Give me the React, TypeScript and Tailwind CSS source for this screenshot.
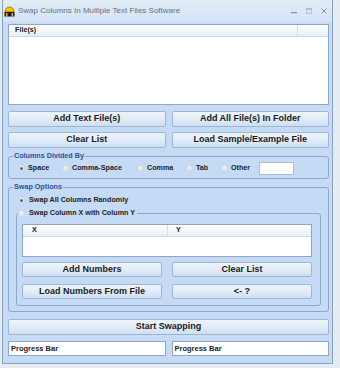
import React from 'react';

const font = { fontFamily: '"Liberation Sans", Arial, sans-serif' };

function Btn({ label, className = '' }: { label: string; className?: string }) {
    return (
        <div className={`flex items-center justify-center rounded-[2px] border border-[#9fb5d2] bg-gradient-to-b from-[#eef4fb] via-[#e2ecf8] to-[#cddff3] text-[9px] font-bold text-[#1b1b1b] ${className}`}>
            {label}
        </div>
    );
}

function Radio({ checked = false }: { checked?: boolean }) {
    return (
        <span className="flex h-[7px] w-[7px] shrink-0 items-center justify-center rounded-full border border-[#cfd6df] bg-gradient-to-b from-[#f4f6f9] to-[#dde3ea]">
            {checked && <span className="h-[3px] w-[3px] rounded-full bg-[#5b626b]" />}
        </span>
    );
}

function Option({ label, checked, w }: { label: string; checked?: boolean; w: string }) {
    return (
        <div className={`flex items-center gap-[3px] ${w}`}>
            <Radio checked={checked} />
            <span className="text-[7.2px] font-bold text-[#222]">{label}</span>
        </div>
    );
}

export default function App() {
    return (
        <div className="h-[368px] w-[340px] overflow-hidden bg-[#e4ebf3] pl-[2px]" style={font}>
            <div className="flex h-[364px] w-[331px] flex-col border border-t-0 border-[#8aa3c4] bg-[#c5daf4]">

                {/* Title bar */}
                <div className="flex h-[22px] shrink-0 items-center bg-gradient-to-b from-[#e3edf9] to-[#d3e3f6] pl-[1px] pr-[4px]">
                    <svg width="11" height="11" viewBox="0 0 11 11" className="shrink-0">
                        <path d="M1 6 Q1 1 5.5 1 Q10 1 10 6 Z" fill="#f2c200" stroke="#7a5a00" strokeWidth="0.6" />
                        <rect x="0.5" y="6" width="10" height="4.5" fill="#1a1a1a" />
                        <rect x="2" y="7" width="1.5" height="3.5" fill="#e8b800" />
                        <rect x="7.5" y="7" width="1.5" height="3.5" fill="#e8b800" />
                    </svg>
                    <span className="ml-[3px] text-[8px] text-[#5f7088]">Swap Columns In Multiple Text Files Software</span>
                    <div className="ml-auto flex items-center gap-[9px] pr-[1px]">
                        <svg width="6" height="6" viewBox="0 0 6 6"><rect x="0" y="4" width="6" height="1.2" fill="#7f8ea3" /></svg>
                        <svg width="6" height="6" viewBox="0 0 6 6"><rect x="0.5" y="0.5" width="5" height="5" fill="none" stroke="#a9b6c7" strokeWidth="0.8" /><rect x="0.5" y="0.5" width="5" height="1.2" fill="#a9b6c7" /></svg>
                        <svg width="6" height="6" viewBox="0 0 6 6"><path d="M0.5 0.5 L5.5 5.5 M5.5 0.5 L0.5 5.5" stroke="#8292a8" strokeWidth="1" /></svg>
                    </div>
                </div>

                {/* Body */}
                <div className="flex flex-col pl-[5px] pr-[3px] pt-[2px]">

                    {/* File list */}
                    <div className="flex h-[81px] flex-col border border-[#8fa6c4] bg-white">
                        <div className="flex h-[12px] border-b border-[#c9d6e6] bg-gradient-to-b from-white to-[#e6eef7]">
                            <div className="flex w-[289px] items-center border-r border-[#d3dde9] pl-[6px] text-[7.2px] font-bold text-[#222]">File(s)</div>
                            <div className="flex-1" />
                        </div>
                    </div>

                    <div className="mt-[6px] grid grid-cols-2 gap-x-[6px] gap-y-[5px]">
                        <Btn label="Add Text File(s)" className="h-[16px]" />
                        <Btn label="Add All File(s) In Folder" className="h-[16px]" />
                        <Btn label="Clear List" className="h-[16px]" />
                        <Btn label="Load Sample/Example File" className="h-[16px]" />
                    </div>

                    {/* Columns Divided By */}
                    <fieldset className="mt-[3px] h-[28px] rounded-[3px] border border-[#8ea7c7]">
                        <legend className="ml-[4px] px-[1px] text-[7.2px] font-bold leading-[10px] text-[#2452a0]">Columns Divided By</legend>
                        <div className="flex h-[14px] items-center pl-[9px] pt-[1px]">
                            <Option label="Space" checked w="w-[44px]" />
                            <Option label="Comma-Space" w="w-[75px]" />
                            <Option label="Comma" w="w-[49px]" />
                            <Option label="Tab" w="w-[35px]" />
                            <Option label="Other" w="w-[38px]" />
                            <div className="h-[13px] w-[35px] border border-[#a9bcd5] bg-white" />
                        </div>
                    </fieldset>

                    {/* Swap Options */}
                    <fieldset className="mt-[3px] rounded-[3px] border border-[#8ea7c7] pb-[5px]">
                        <legend className="ml-[4px] px-[1px] text-[7.2px] font-bold leading-[10px] text-[#2452a0]">Swap Options</legend>
                        <div className="mt-[3px] flex h-[10px] items-center gap-[4px] pl-[9px]">
                            <Radio checked />
                            <span className="text-[7.2px] font-bold text-[#222]">Swap All Columns Randomly</span>
                        </div>

                        <fieldset className="ml-[7px] mr-[7px] mt-[3px] rounded-[3px] border border-[#8ea7c7] pb-[6px] pl-[5px] pr-[8px]">
                            <legend className="-ml-[4px] flex items-center gap-[4px] pr-[2px] leading-[10px]">
                                <Radio />
                                <span className="text-[7.2px] font-bold text-[#222]">Swap Column X with Column Y</span>
                            </legend>
                            <div className="mt-[6px] flex h-[33px] flex-col border border-[#8fa6c4] bg-white">
                                <div className="flex h-[12px] border-b border-[#c9d6e6] bg-gradient-to-b from-white to-[#e6eef7]">
                                    <div className="flex w-[145px] items-center border-r border-[#d3dde9] pl-[9px] text-[7.2px] font-bold text-[#222]">X</div>
                                    <div className="flex flex-1 items-center pl-[8px] text-[7.2px] font-bold text-[#222]">Y</div>
                                </div>
                            </div>
                            <div className="mt-[5px] grid grid-cols-2 gap-x-[10px] gap-y-[7px]">
                                <Btn label="Add Numbers" className="h-[15px]" />
                                <Btn label="Clear List" className="h-[15px]" />
                                <Btn label="Load Numbers From File" className="h-[15px]" />
                                <Btn label="<- ?" className="h-[15px]" />
                            </div>
                        </fieldset>
                    </fieldset>

                    <Btn label="Start Swapping" className="mt-[7px] h-[16px]" />

                    <div className="mt-[6px] grid grid-cols-2 gap-x-[6px]">
                        <div className="flex h-[15px] items-center border border-[#8fa6c4] bg-white pl-[2px] text-[7.5px] font-bold text-[#222]">Progress Bar</div>
                        <div className="flex h-[15px] items-center border border-[#8fa6c4] bg-white pl-[2px] text-[7.5px] font-bold text-[#222]">Progress Bar</div>
                    </div>
                </div>
            </div>
        </div>
    );
}
